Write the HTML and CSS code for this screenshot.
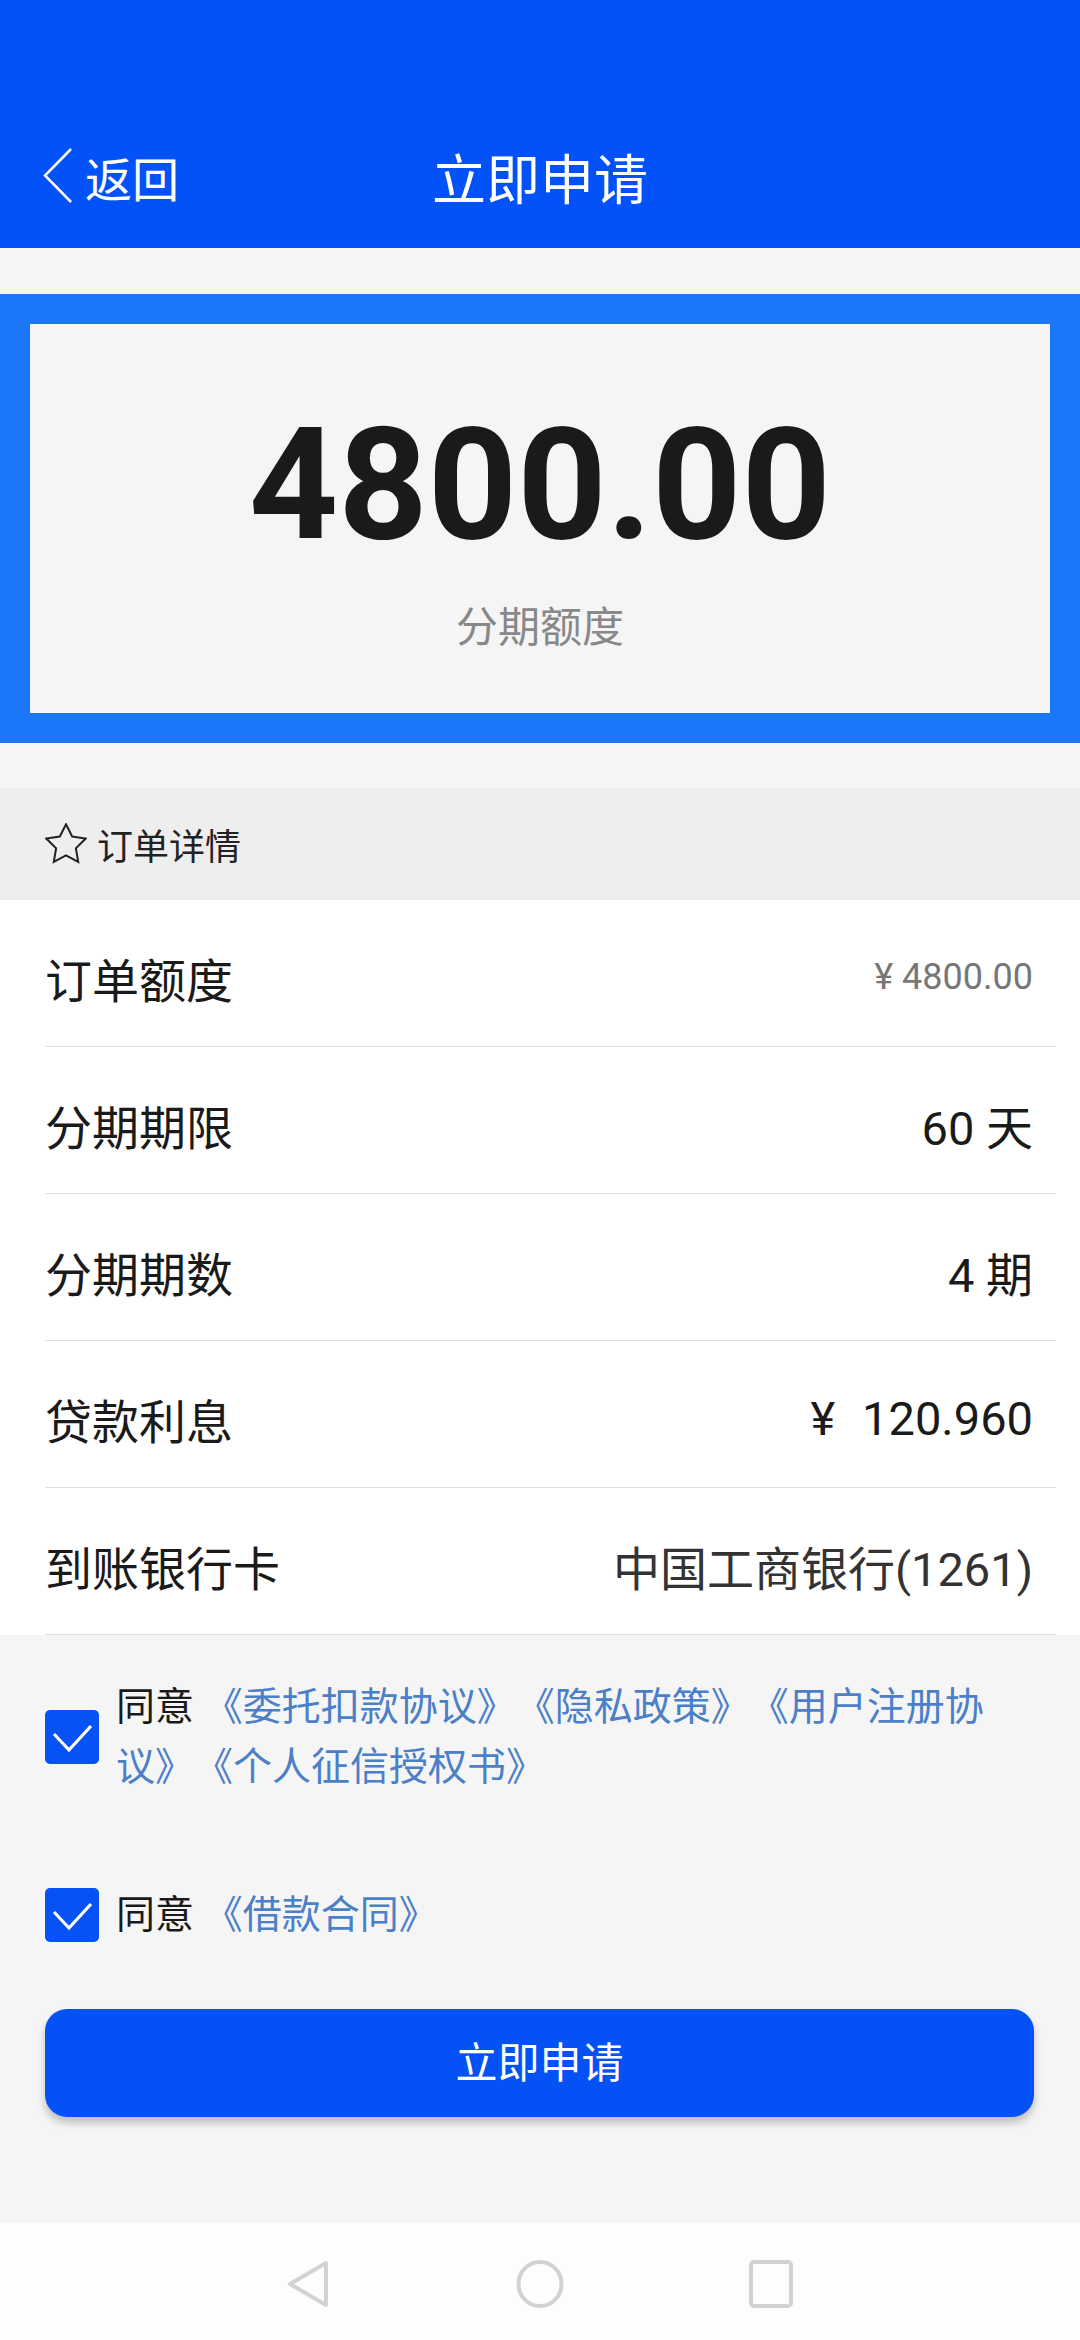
FILE: index.html
```html
<!DOCTYPE html>
<html lang="zh-CN">
<head>
    <meta charset="UTF-8">
    <meta name="viewport" content="width=device-width, initial-scale=1.0">
    <title>立即申请</title>
    <link rel="stylesheet" href="styles.css">
</head>
<body>
    <div class="page">
        <header class="topbar">
            <a href="#" class="back">
                <svg width="30" height="56" viewBox="0 0 30 56"><polyline points="28,1 2,27.5 28,54" fill="none" stroke="#fff" stroke-width="2.5"/></svg>
                <span>返回</span>
            </a>
            <h1>立即申请</h1>
            <span></span>
        </header>

        <!-- Quota card -->
        <section class="quota">
            <div class="amount">4800.00</div>
            <div class="amount-label">分期额度</div>
        </section>

        <!-- Order details -->
        <div class="detail-head">
            <svg width="42" height="42" viewBox="2 2 20 20"><path d="M12 2.6L14.94 8.45L21.4 9.4L16.7 14.03L17.82 20.5L12 17.45L6.18 20.5L7.3 14.03L2.6 9.4L9.06 8.45Z" fill="none" stroke="#222" stroke-width="0.95" stroke-linejoin="miter"/></svg>
            <span>订单详情</span>
        </div>
        <ul class="detail-list">
            <li class="detail-row"><span>订单额度</span><span class="value muted">¥ 4800.00</span></li>
            <li class="detail-row"><span>分期期限</span><span class="value">60 天</span></li>
            <li class="detail-row"><span>分期期数</span><span class="value">4 期</span></li>
            <li class="detail-row"><span>贷款利息</span><span class="value"><span class="cur">¥</span>120.960</span></li>
            <li class="detail-row"><span>到账银行卡</span><span class="value bank">中国工商银行(1261)</span></li>
        </ul>

        <!-- Agreements -->
        <div class="agree">
            <div class="agree-item">
                <span class="check"><svg width="54" height="54" viewBox="0 0 54 54"><polyline points="9,24 24,40 46,16" fill="none" stroke="#fff" stroke-width="3.2"/></svg></span>
                <p>同意 <a href="#">《委托扣款协议》</a><a href="#">《隐私政策》</a><a href="#">《用户注册协议》</a><a href="#">《个人征信授权书》</a></p>
            </div>
            <div class="agree-item">
                <span class="check"><svg width="54" height="54" viewBox="0 0 54 54"><polyline points="9,24 24,40 46,16" fill="none" stroke="#fff" stroke-width="3.2"/></svg></span>
                <p>同意 <a href="#">《借款合同》</a></p>
            </div>
            <button class="apply">立即申请</button>
        </div>

        <footer class="navbar">
            <svg width="48" height="48" viewBox="0 0 48 48"><polygon points="41,3 5,24 41,45" fill="none" stroke="#d2d2d2" stroke-width="4" stroke-linejoin="round"/></svg>
            <svg width="48" height="48" viewBox="0 0 48 48"><ellipse cx="24" cy="24" rx="21.5" ry="22" fill="none" stroke="#d2d2d2" stroke-width="4"/></svg>
            <svg width="48" height="48" viewBox="0 0 48 48"><rect x="4" y="2" width="40" height="44" rx="3" fill="none" stroke="#d2d2d2" stroke-width="4"/></svg>
        </footer>
    </div>
</body>
</html>
```

FILE: styles.css
```css
body {
    margin: 0;
    background-color: #f5f5f5;
    font-family: Roboto, "Noto Sans CJK SC", sans-serif;
    color: #1a1a1a;
}

.page {
    min-height: 100vh;
    display: flex;
    flex-direction: column;
}

.topbar {
    height: 248px;
    box-sizing: border-box;
    padding: 104px 43px 0;
    background-color: #0352f7;
    color: white;
    display: grid;
    grid-template-columns: 1fr auto 1fr;
    align-items: center;
}

.back {
    display: flex;
    align-items: center;
    gap: 12px;
    color: white;
    text-decoration: none;
    font-size: 47px;
}

.topbar h1 {
    margin: 0;
    font-size: 54px;
    font-weight: 400;
}

.quota {
    margin-top: 46px;
    height: 449px;
    box-sizing: border-box;
    padding-top: 83px;
    border: 30px solid #1a78f8;
    background-color: #f5f5f5;
    text-align: center;
}

.amount {
    font-size: 156px;
    font-weight: 700;
    line-height: 1;
    color: #1a1a1a;
}

.amount-label {
    margin-top: 44px;
    font-size: 42px;
    line-height: 1;
    color: #888;
}

.detail-head {
    margin-top: 45px;
    height: 112px;
    padding-left: 45px;
    background-color: #eeeeee;
    display: flex;
    align-items: center;
    gap: 10px;
    font-size: 36px;
    color: #222;
}

.detail-list {
    margin: 0;
    padding: 0 24px 0 45px;
    list-style: none;
    background-color: white;
}

.detail-row {
    height: 147px;
    box-sizing: border-box;
    padding: 8px 23px 0 0;
    border-bottom: 1px solid #e0e0e0;
    display: flex;
    align-items: center;
    justify-content: space-between;
    font-size: 47px;
}

.value.muted {
    font-size: 36px;
    color: #777;
}

.value.bank {
    color: #333;
}

.cur {
    margin-right: 27px;
}

.agree {
    flex: 1;
    padding: 42px 46px 106px 45px;
}

.agree-item {
    display: flex;
    align-items: center;
    gap: 17px;
}

.agree-item + .agree-item {
    margin-top: 88px;
}

.agree-item p {
    margin: 0;
    font-size: 39px;
    line-height: 60px;
    color: #1a1a1a;
    text-spacing-trim: space-all;
}

.agree-item a {
    color: #4b7fc8;
    text-decoration: none;
}

.check {
    flex: none;
    width: 54px;
    height: 54px;
    border-radius: 5px;
    background-color: #0652f5;
    display: flex;
}

.apply {
    display: block;
    width: 100%;
    height: 108px;
    margin-top: 64px;
    padding-bottom: 8px;
    border: none;
    border-radius: 22px;
    background-color: #0452f6;
    color: white;
    font-family: inherit;
    font-size: 42px;
    box-shadow: 0 6px 8px rgba(0, 0, 0, 0.22);
}

.navbar {
    height: 117px;
    padding-top: 4px;
    box-sizing: border-box;
    background-color: #fdfdfd;
    display: flex;
    align-items: center;
    justify-content: center;
    gap: 183px;
}
```
